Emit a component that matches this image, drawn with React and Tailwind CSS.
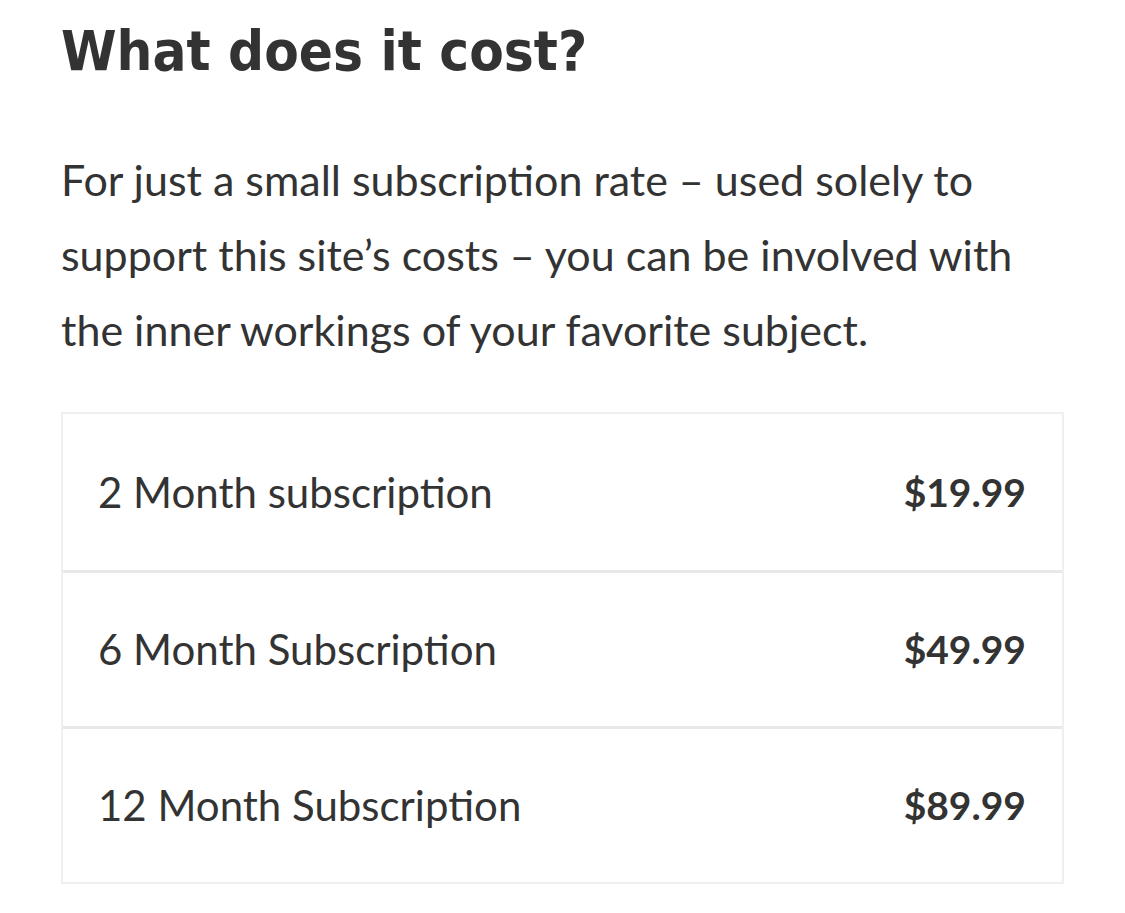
import React from 'react';

const plans = [
  { name: '2 Month subscription', price: '$19.99' },
  { name: '6 Month Subscription', price: '$49.99' },
  { name: '12 Month Subscription', price: '$89.99' },
];

const App = () => {
  return (
    <div className="min-h-screen bg-white text-[#333333]">
      <div className="pl-[61px] pr-[61px] pt-[16px]">
        <h1 className="font-['DejaVu_Sans_Condensed',sans-serif] font-bold text-[56px] leading-[70px] text-[#333333]">
          What does it cost?
        </h1>
        <p className="mt-[56px] font-['Lato',sans-serif] text-[43px] leading-[75px] text-[#333333]">
          For just a small subscription rate – used solely to support this site’s costs – you can be involved with the inner workings of your favorite subject.
        </p>
        <div className="mt-[45px] w-[1003px] border-2 border-[#efefef]">
          {plans.map((plan, i) => (
            <div
              key={plan.name}
              className={`flex items-center justify-between h-[156px] pl-[35px] pr-[36px] font-['Lato',sans-serif] ${i > 0 ? 'border-t-[3px] border-[#e8e8e8]' : ''}`}
            >
              <span className="text-[42px]">{plan.name}</span>
              <span className="text-[39px] font-bold">{plan.price}</span>
            </div>
          ))}
        </div>
      </div>
    </div>
  );
};

export default App;
